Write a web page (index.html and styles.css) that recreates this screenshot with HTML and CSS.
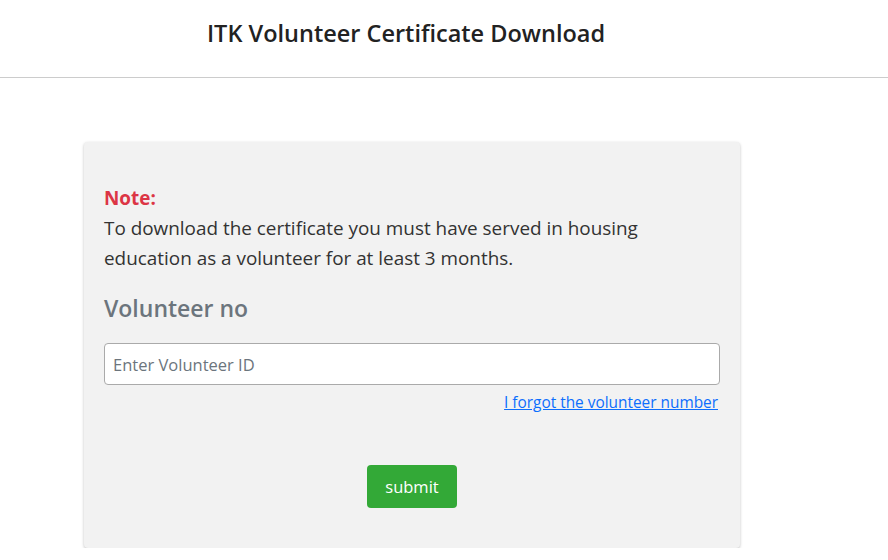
FILE: index.html
```html
<!DOCTYPE html>
<html>
	<head>
		<meta charset="UTF-8">
		<title>ITK Volunteer Certificate Download</title>
		<link rel="stylesheet" href="styles.css">
	</head>
	<body>
		<div class="top">
			<h1 class="title">ITK Volunteer Certificate Download</h1>
		</div>
		<div class="wrap">
			<form class="card" onsubmit="return false;">
				<div class="note">
					<strong class="note-head">Note:</strong>
					<p>To download the certificate you must have served in housing education as a volunteer for at least 3 months.</p>
				</div>
				<h2 class="label">Volunteer no</h2>
				<input class="field" type="text" placeholder="Enter Volunteer ID"/>
				<div class="forgot"><a href="#">I forgot the volunteer number</a></div>
				<div class="actions">
					<button class="btn" type="submit">submit</button>
				</div>
			</form>
		</div>
	</body>
</html>
```
FILE: styles.css
```css
*{margin:0;padding:0;box-sizing:border-box;}
body{font-family:"Open Sans",sans-serif;color:#212529;background:#fff;}
.top{height:78px;border-bottom:1px solid #ccc;display:flex;align-items:center;justify-content:center;padding-right:76px;}
.title{font-size:23.5px;font-weight:600;color:#222;margin-top:-12px;}
.wrap{padding:64px 0 0 84px;}
.card{width:656px;background:#f2f2f2;border-radius:4px;box-shadow:0 1px 3px rgba(0,0,0,.25);padding:41px 20px 40px;}
.note{font-size:18.9px;line-height:30px;color:#333;}
.note-head{display:block;color:#dc3545;font-weight:700;}
.note p{width:560px;}
.label{font-size:23px;line-height:36px;font-weight:600;color:#6c757d;margin-top:17px;}
.field{display:block;width:100%;height:42px;margin-top:17px;border:1px solid #aaa;border-radius:4px;background:#fff;padding:0 8px;font-family:inherit;font-size:16.5px;color:#333;}
.field::placeholder{color:#6c757d;}
.forgot{text-align:right;font-size:15.4px;line-height:20px;margin-top:8px;padding-right:2px;}
.forgot a{color:#0d6efd;}
.actions{text-align:center;margin-top:52px;}
.btn{width:90px;height:43px;background:#33a937;color:#fff;border:0;border-radius:4px;font-family:inherit;font-size:16.5px;}
```
